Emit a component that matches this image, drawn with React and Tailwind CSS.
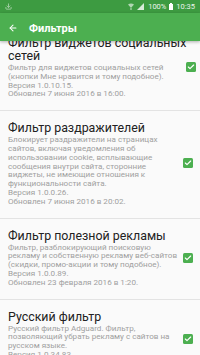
import { ArrowLeft, Download, Check } from "lucide-react";

const filters = [
  {
    title: ["Фильтр виджетов социальных", "сетей"],
    lines: [
      "Фильтр для виджетов социальных сетей",
      "(кнопки Мне нравится и тому подобное).",
      "Версия 1.0.10.15.",
      "Обновлен 7 июня 2016 в 16:00.",
    ],
  },
  {
    title: ["Фильтр раздражителей"],
    lines: [
      "Блокирует раздражители на страницах",
      "сайтов, включая уведомления об",
      "использовании cookie, всплывающие",
      "сообщения внутри сайта, сторонние",
      "виджеты, не имеющие отношения к",
      "функциональности сайта.",
      "Версия 1.0.0.26.",
      "Обновлен 7 июня 2016 в 20:02.",
    ],
  },
  {
    title: ["Фильтр полезной рекламы"],
    lines: [
      "Фильтр, разблокирующий поисковую",
      "рекламу и собственную рекламу веб-сайтов",
      "(скидки, промо-акции и тому подобное).",
      "Версия 1.0.0.89.",
      "Обновлен 23 февраля 2016 в 1:20.",
    ],
  },
  {
    title: ["Русский фильтр"],
    lines: [
      "Русский фильтр Adguard. Фильтр,",
      "позволяющий убрать рекламу с сайтов на",
      "русском языке.",
      "Версия 1.0.34.83.",
      "Обновлен 7 июня 2016 в 16:00.",
    ],
  },
];

function StatusBar() {
  return (
    <div className="h-[13px] bg-[#3d9b41] flex items-center justify-between pl-[5px] pr-[5px] text-white/90">
      <Download className="w-[7px] h-[7px] opacity-60" strokeWidth={3} />
      <div className="flex items-center gap-[3px] text-[7.5px] leading-none">
        <svg width="6" height="7" viewBox="0 0 6 7" className="opacity-60">
          <path d="M0 1.5 Q3 -0.5 6 1.5 L3 5 Z" fill="white" />
          <rect x="2.4" y="5" width="1.2" height="2" fill="white" />
        </svg>
        <svg width="7" height="7" viewBox="0 0 7 7" className="opacity-80">
          <path d="M0 7 L7 0 L7 7 Z" fill="white" />
        </svg>
        <span className="ml-[1px]">100%</span>
        <svg width="4" height="7" viewBox="0 0 4 7">
          <rect x="1" y="0" width="2" height="1" fill="white" />
          <rect x="0" y="1" width="4" height="6" fill="white" />
        </svg>
        <span>10:35</span>
      </div>
    </div>
  );
}

function Toolbar() {
  return (
    <div className="relative z-10 h-[28px] bg-[#4caf50] flex items-center pl-[8px] shadow-[0_1px_3px_rgba(0,0,0,0.3)]">
      <ArrowLeft className="w-[10px] h-[10px] text-white mt-[2px]" strokeWidth={2.5} />
      <span className="ml-[11px] mt-[2px] text-white font-bold text-[11px] leading-none">
        Фильтры
      </span>
    </div>
  );
}

function FilterItem({ item }) {
  return (
    <div className="flex items-center border-b border-[#e3e3e3] pt-[10px] pb-[12px] pl-[8px] pr-[7px]">
      <div className="flex-1">
        <div className="text-[12.4px] leading-[13px] text-[#222222]">
          {item.title.map((t) => (
            <div key={t} className="whitespace-nowrap">
              {t}
            </div>
          ))}
        </div>
        <div className="mt-[1px] text-[8.1px] leading-[8.8px] text-[#a0a0a0]">
          {item.lines.map((l) => (
            <div key={l} className="whitespace-nowrap">
              {l}
            </div>
          ))}
        </div>
      </div>
      <div className="w-[10px] h-[10px] rounded-[1.5px] bg-[#4caf50] flex items-center justify-center shrink-0">
        <Check className="w-[8px] h-[8px] text-white" strokeWidth={3.5} />
      </div>
    </div>
  );
}

export default function App() {
  return (
    <div
      className="w-[200px] h-[355px] overflow-hidden bg-[#fafafa] flex flex-col"
      style={{ fontFamily: "Roboto, 'Noto Sans', sans-serif" }}
    >
      <StatusBar />
      <Toolbar />
      <div className="flex-1 overflow-hidden">
        <div className="-mt-[15px]">
          {filters.map((f) => (
            <FilterItem key={f.title[0]} item={f} />
          ))}
        </div>
      </div>
    </div>
  );
}
